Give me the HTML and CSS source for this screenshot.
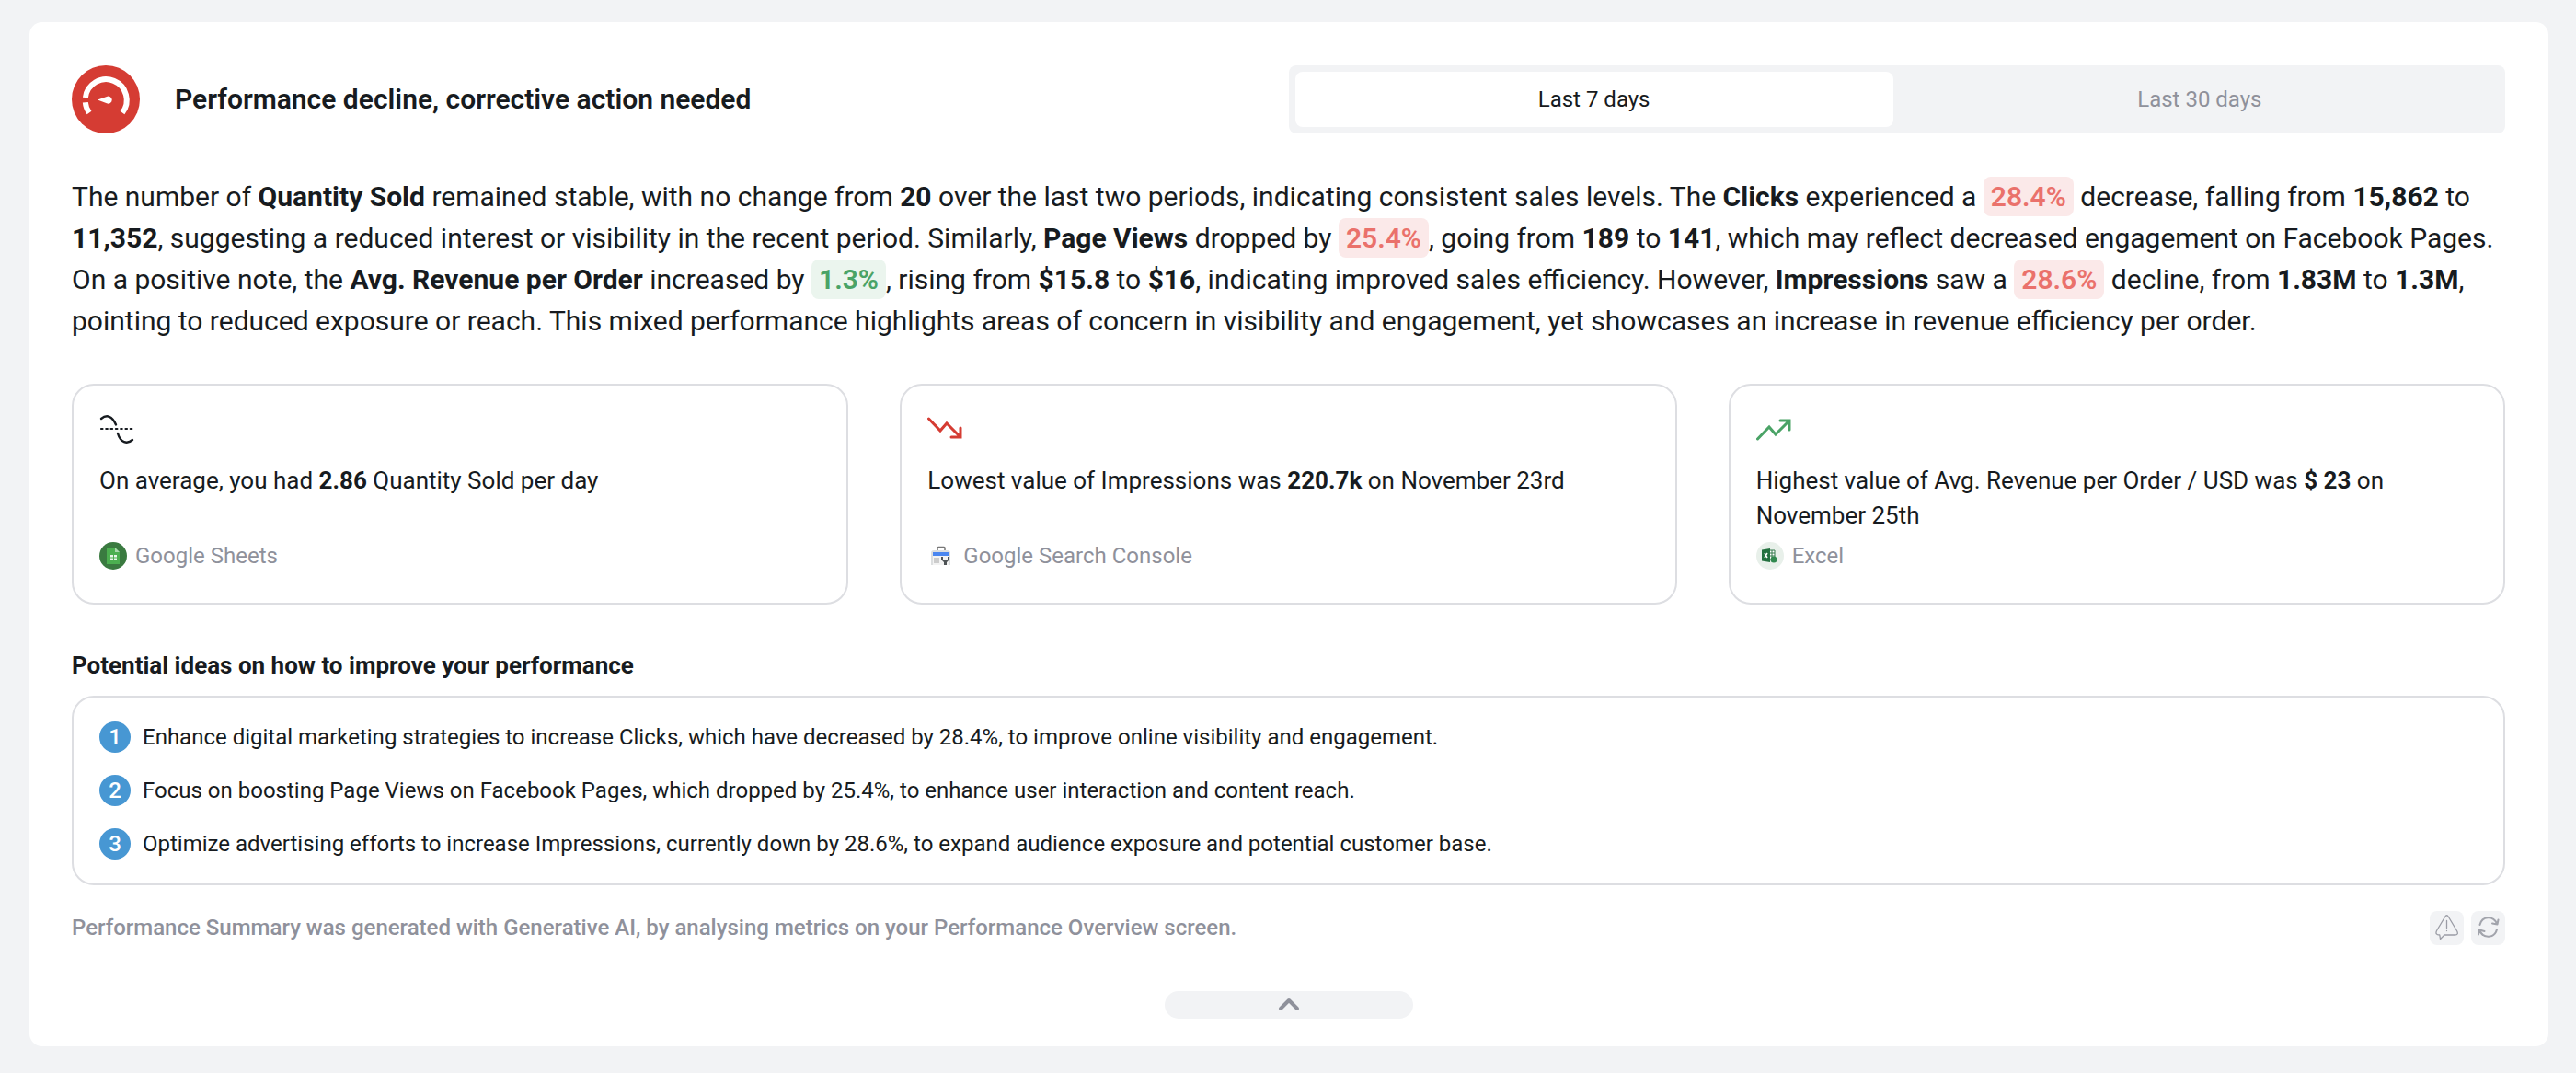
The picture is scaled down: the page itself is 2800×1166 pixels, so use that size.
FILE: index.html
```html
<!DOCTYPE html>
<html lang="en">
<head>
<meta charset="utf-8">
<meta name="viewport" content="width=device-width, initial-scale=1">
<title>Performance Summary</title>
<link rel="stylesheet" href="styles.css">
</head>
<body>
<main class="panel">
  <header class="head">
    <div class="head-title">
      <svg class="gauge" viewBox="0 0 74 74" aria-hidden="true">
        <circle cx="37" cy="37" r="37" fill="#d53c33"/>
        <path d="M19 51.500A22.500 22.500 0 0 1 14.800 40.300M14.900 35A22.500 22.500 0 1 1 55 51.500" fill="none" stroke="#fff" stroke-width="6"/>
        <path d="M28 37.500L38 34a4 4 0 1 1 0 7.200z" fill="#fff"/>
      </svg>
      <h1>Performance decline, corrective action needed</h1>
    </div>
    <div class="segmented">
      <button type="button" class="segment active" aria-pressed="true">Last 7 days</button>
      <button type="button" class="segment" aria-pressed="false">Last 30 days</button>
    </div>
  </header>

  <p class="summary">The number of <b>Quantity Sold</b> remained stable, with no change from <b>20</b> over the last two periods, indicating consistent sales levels. The <b>Clicks</b> experienced a <span class="badge down">28.4%</span> decrease, falling from <b>15,862</b> to <b>11,352</b>, suggesting a reduced interest or visibility in the recent period. Similarly, <b>Page Views</b> dropped by <span class="badge down">25.4%</span>, going from <b>189</b> to <b>141</b>, which may reflect decreased engagement on Facebook Pages. On a positive note, the <b>Avg. Revenue per Order</b> increased by <span class="badge up">1.3%</span>, rising from <b>$15.8</b> to <b>$16</b>, indicating improved sales efficiency. However, <b>Impressions</b> saw a <span class="badge down">28.6%</span> decline, from <b>1.83M</b> to <b>1.3M</b>, pointing to reduced exposure or reach. This mixed performance highlights areas of concern in visibility and engagement, yet showcases an increase in revenue efficiency per order.</p>

  <section class="cards">
    <article class="card">
      <svg class="trend" viewBox="0 0 38 38" fill="none" stroke="#171b20" stroke-width="2.400" stroke-linecap="round" aria-hidden="true">
        <path d="M2 8C8 3 14 5 18 14.500M20 24C23 34 30 36 36 31"/>
        <path d="M2 19H36" stroke-dasharray="1.500 3.800" stroke-width="2.200"/>
      </svg>
      <p class="fact">On average, you had <b>2.86</b> Quantity Sold per day</p>
      <div class="source">
        <svg class="logo" viewBox="0 0 30 30" aria-hidden="true">
          <circle cx="15" cy="15" r="15" fill="#3a7a40"/>
          <path d="M8 6h9l5 5v13H8z" fill="#4caf50"/><path d="M17 6l5 5h-5z" fill="#a8d8ac"/>
          <path d="M12 14h7v6h-7z" fill="#e8f5e9"/><path d="M12 17h7M15.500 14v6" stroke="#4caf50"/>
        </svg>
        <span>Google Sheets</span>
      </div>
    </article>
    <article class="card">
      <svg class="trend" viewBox="0 0 38 38" fill="none" stroke="#d53c33" stroke-width="3" stroke-linecap="round" aria-hidden="true">
        <path d="M1.500 8L14 21L21 13L35 27M26 28H36V18"/>
      </svg>
      <p class="fact">Lowest value of Impressions was <b>220.7k</b> on November 23rd</p>
      <div class="source">
        <svg class="logo" viewBox="0 0 30 30" aria-hidden="true">
          <path d="M11 9V6.500q0-1 1-1h6q1 0 1 1V9" fill="none" stroke="#777" stroke-width="1.500"/>
          <path d="M4 12q0-3 3-3h15q3 0 3 3v13H4z" fill="#dcdedf"/>
          <path d="M6 11h18v4H6z" fill="#4a86f0"/><path d="M6 15h18v10H6z" fill="#f3f3f3"/><path d="M7 17h6v6H7z" fill="#ccc"/>
          <path d="M15 16v3l3 3v3h3v-3l3-3v-3l-2 0v3h-5v-3z" fill="#4f5356"/>
        </svg>
        <span>Google Search Console</span>
      </div>
    </article>
    <article class="card">
      <svg class="trend" viewBox="0 0 38 38" fill="none" stroke="#4aa366" stroke-width="3" stroke-linecap="round" aria-hidden="true">
        <path d="M1.500 30L14 17L21 25L35 11M26 10H36V20"/>
      </svg>
      <p class="fact">Highest value of Avg. Revenue per Order / USD was <b>$ 23</b> on November 25th</p>
      <div class="source">
        <svg class="logo" viewBox="0 0 30 30" aria-hidden="true">
          <circle cx="15" cy="15" r="15" fill="#e8f0ea"/>
          <path d="M14 9h6v10h-6z" fill="#fff" stroke="#357a4d"/><path d="M14 12h6M14 15h6M17 9v10" stroke="#357a4d"/>
          <path d="M6 8.500L15 7v15L6 20.500z" fill="#23703f"/>
          <path d="M9 12l3 5M12 12l-3 5" stroke="#fff" stroke-width="1.500"/>
          <circle cx="19" cy="19" r="3.500" fill="#31894f"/>
        </svg>
        <span>Excel</span>
      </div>
    </article>
  </section>

  <section class="ideas">
    <h2>Potential ideas on how to improve your performance</h2>
    <ol class="idea-list">
      <li><span class="num">1</span>Enhance digital marketing strategies to increase Clicks, which have decreased by 28.4%, to improve online visibility and engagement.</li>
      <li><span class="num">2</span>Focus on boosting Page Views on Facebook Pages, which dropped by 25.4%, to enhance user interaction and content reach.</li>
      <li><span class="num">3</span>Optimize advertising efforts to increase Impressions, currently down by 28.6%, to expand audience exposure and potential customer base.</li>
    </ol>
  </section>

  <footer class="foot">
    <p class="note">Performance Summary was generated with Generative AI, by analysing metrics on your Performance Overview screen.</p>
    <div class="actions">
      <button type="button" class="icon-button" aria-label="Report an issue">
        <svg viewBox="0 0 37 37" fill="none" stroke="#9a9ca5" stroke-width="1.300" stroke-linecap="round" stroke-linejoin="round" aria-hidden="true">
          <path d="M16.500 6.500Q18.500 3 20.500 6.500L29.800 22Q31.500 26 27.500 26H16L11.500 30.500L10.800 26Q5.500 26 7.500 21.500Z"/>
          <path d="M18.500 10.500V18.500M18.500 21.500V21.600"/>
        </svg>
      </button>
      <button type="button" class="icon-button" aria-label="Regenerate">
        <svg viewBox="0 0 37 37" fill="none" stroke="#a2a4ac" stroke-width="2" stroke-linecap="round" stroke-linejoin="round" aria-hidden="true">
          <path d="M9.500 15C12 5 24 5 28 13.500M23 13.500L28.500 14.500L29.500 9.500M28 20C25.500 30 13 30 9.500 21.500M8 25.500L9 20.500L14.500 22"/>
        </svg>
      </button>
    </div>
  </footer>

  <button type="button" class="collapse" aria-label="Collapse">
    <svg viewBox="0 0 24 16" fill="none" stroke="#8f919b" stroke-width="4" stroke-linecap="round" stroke-linejoin="round" aria-hidden="true"><path d="M3 12L12 3L21 12"/></svg>
  </button>
</main>
</body>
</html>
```
FILE: styles.css
```css
* { box-sizing: border-box; }

body {
  margin: 0;
  padding: 24px 30px 28px 32px;
  background: #f2f3f5;
  color: #171b20;
  font-family: Roboto, "Liberation Sans", sans-serif;
  font-size: 24px;
  line-height: 38px;
}

h1, h2, p, ol { margin: 0; }
b { font-weight: 700; }
button { border: 0; padding: 0; font: inherit; cursor: pointer; }
svg { display: block; flex: none; }

.panel {
  display: flex;
  flex-direction: column;
  padding: 47px 47px 30px 46px;
  border-radius: 14px;
  background: #fff;
}

.head { display: grid; grid-template-columns: 1fr 1fr; align-items: center; }
.head-title { display: flex; align-items: center; gap: 38px; }
.gauge { width: 74px; height: 74px; }
h1 { font-size: 30px; font-weight: 600; }

.segmented {
  display: grid;
  grid-template-columns: 1fr 1fr;
  gap: 8px;
  height: 74px;
  padding: 7px;
  border-radius: 8px;
  background: #f2f3f5;
}
.segment { border-radius: 8px; background: transparent; color: #8f919b; }
.segment.active { background: #fff; color: #171b20; }

.summary { margin-top: 46px; font-size: 30px; line-height: 45px; }
.badge { padding: 4px 8px; border-radius: 8px; font-weight: 600; }
.badge.down { background: #fbe9e9; color: #ea716b; }
.badge.up { background: #ebf5ee; color: #4aa366; }

.cards {
  display: grid;
  grid-template-columns: repeat(3, 1fr);
  gap: 56px;
  margin-top: 46px;
}
.card {
  display: flex;
  flex-direction: column;
  min-height: 240px;
  padding: 28px;
  border: 2px solid #dddee2;
  border-radius: 24px;
}
.trend { width: 38px; height: 38px; }
.fact { min-height: 76px; margin-top: 18px; font-size: 26px; }
.source { display: flex; align-items: center; gap: 9px; margin-top: 6px; color: #8f919b; }
.logo { width: 30px; height: 30px; }

.ideas { margin-top: 47px; }
h2 { font-size: 26px; font-weight: 700; }
.idea-list {
  display: flex;
  flex-direction: column;
  gap: 20px;
  margin-top: 14px;
  padding: 24px 28px;
  border: 2px solid #dddee2;
  border-radius: 24px;
  list-style: none;
}
.idea-list li { display: flex; align-items: center; gap: 13px; }
.num {
  width: 34px;
  height: 34px;
  border-radius: 50%;
  background: #4797d3;
  color: #fff;
  font-weight: 500;
  line-height: 34px;
  text-align: center;
}

.foot { display: flex; align-items: center; justify-content: space-between; margin-top: 27px; }
.note { color: #8f919b; font-weight: 500; }
.actions { display: flex; gap: 8px; }
.icon-button { width: 37px; height: 37px; border-radius: 8px; background: #f2f3f5; }

.collapse {
  display: grid;
  place-items: center;
  align-self: center;
  width: 270px;
  height: 30px;
  margin-top: 50px;
  border-radius: 15px;
  background: #f2f3f5;
}
.collapse svg { width: 24px; height: 16px; }
```
